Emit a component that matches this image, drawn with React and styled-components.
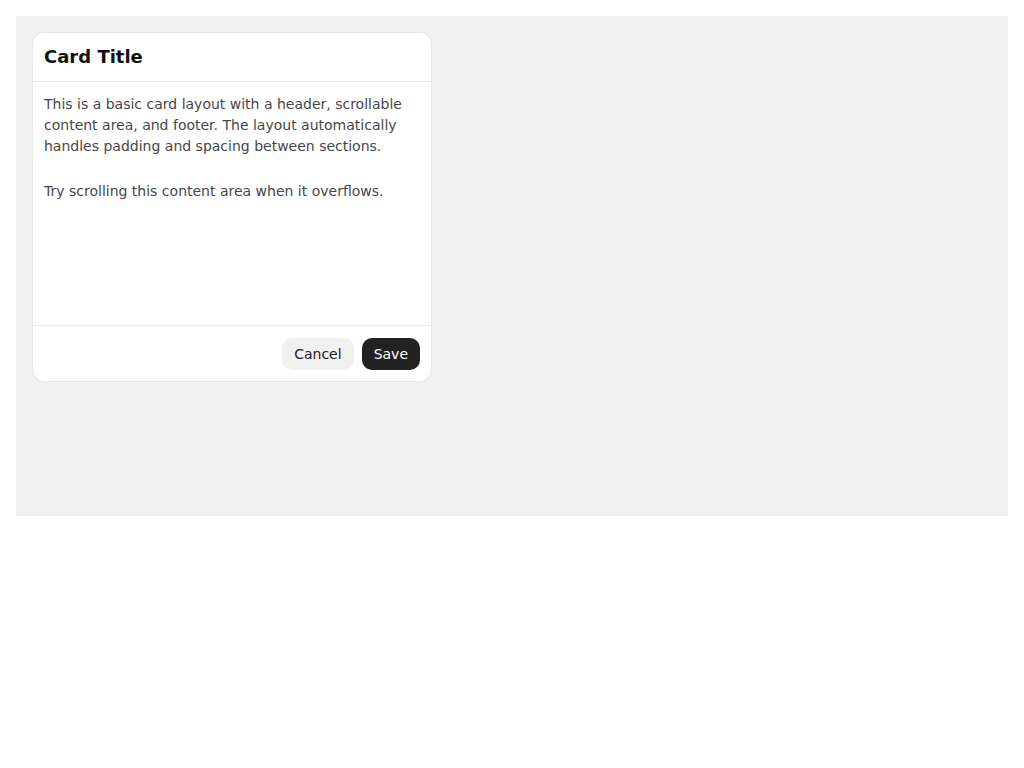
import React from "react";
import styled, { createGlobalStyle } from "styled-components";

const Global = createGlobalStyle`
  html, body { margin: 0; padding: 0; background: #ffffff; }
  body { font-family: "DejaVu Sans", "Liberation Sans", sans-serif; }
  * { box-sizing: border-box; }
`;

const Page = styled.div`
  padding: 16px;
`;

const Stage = styled.div`
  height: 500px;
  background: #f0f0f0;
  padding: 16px;
`;

const Card = styled.div`
  width: 400px;
  height: 350px;
  background: #ffffff;
  border: 1px solid #e6e6e6;
  border-radius: 12px;
  display: flex;
  flex-direction: column;
  overflow: hidden;
`;

const Header = styled.div`
  padding: 12px 11px;
  border-bottom: 1px solid #ebebeb;
`;

const Title = styled.h2`
  margin: 0;
  font-size: 18px;
  line-height: 24px;
  font-weight: 700;
  color: #111111;
`;

const Body = styled.div`
  flex: 1;
  overflow-y: auto;
  padding: 12px 11px;
`;

const Paragraph = styled.p`
  margin: 0 0 24px;
  font-size: 14px;
  line-height: 21px;
  color: #474747;
  &:last-child { margin-bottom: 0; }
`;

const Footer = styled.div`
  display: flex;
  justify-content: flex-end;
  gap: 8px;
  padding: 12px 11px 11px;
  border-top: 1px solid #ebebeb;
`;

const Button = styled.button`
  font-family: "DejaVu Sans", "Liberation Sans", sans-serif;
  font-size: 14px;
  line-height: 20px;
  padding: 6px 12px;
  border: none;
  border-radius: 10px;
  cursor: pointer;
  background: ${(p) => (p.$primary ? "#222222" : "#f0f0f0")};
  color: ${(p) => (p.$primary ? "#ffffff" : "#222222")};
`;

export default function App() {
  return (
    <>
      <Global />
      <Page>
        <Stage>
          <Card>
            <Header>
              <Title>Card Title</Title>
            </Header>
            <Body>
              <Paragraph>
                This is a basic card layout with a header, scrollable content
                area, and footer. The layout automatically handles padding and
                spacing between sections.
              </Paragraph>
              <Paragraph>Try scrolling this content area when it overflows.</Paragraph>
            </Body>
            <Footer>
              <Button>Cancel</Button>
              <Button $primary>Save</Button>
            </Footer>
          </Card>
        </Stage>
      </Page>
    </>
  );
}
